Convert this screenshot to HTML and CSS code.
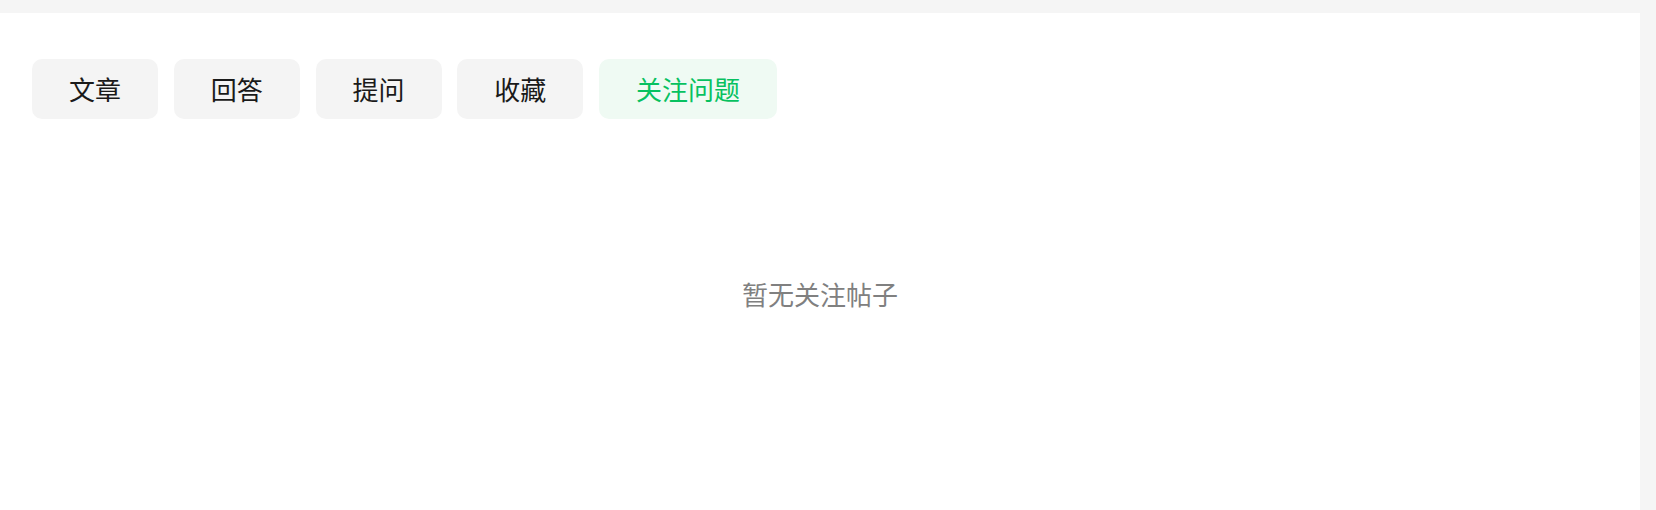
FILE: index.html
```html
<!DOCTYPE html>
<html lang="zh-CN">
<head>
    <meta charset="UTF-8">
    <meta name="viewport" content="width=device-width, initial-scale=1.0">
    <title>我的关注</title>
    <link rel="stylesheet" href="styles.css">
</head>
<body>
    <div class="zhuye">
        <div class="tab-bar">
            <button class="tab">文章</button>
            <button class="tab">回答</button>
            <button class="tab">提问</button>
            <button class="tab">收藏</button>
            <button class="tab active">关注问题</button>
        </div>

        <div class="kong">
            <p>暂无关注帖子</p>
        </div>
    </div>
</body>
</html>
```

FILE: styles.css
```css
* {
    margin: 0;
    padding: 0;
    box-sizing: border-box;
    font-family: "Noto Sans CJK SC", "Noto Sans", sans-serif;
}

html, body {
    height: 100%;
}

body {
    background: #f5f5f5;
    padding-top: 13px;
    padding-right: 16px;
    overflow: hidden;
}

.zhuye {
    background: #fff;
    height: 100%;
}

.tab-bar {
    display: flex;
    gap: 15.75px;
    padding: 46px 0 0 32px;
}

.tab {
    height: 60px;
    padding: 0 37px;
    border: none;
    border-radius: 10px;
    background: #f4f4f4;
    color: #1a1a1a;
    font-size: 26px;
    line-height: 60px;
    cursor: pointer;
}

.tab.active {
    background: #effaf3;
    color: #07c160;
}

.kong {
    display: flex;
    justify-content: center;
    padding-top: 160px;
}

.kong p {
    font-size: 26px;
    line-height: 30px;
    color: #808080;
}
```
